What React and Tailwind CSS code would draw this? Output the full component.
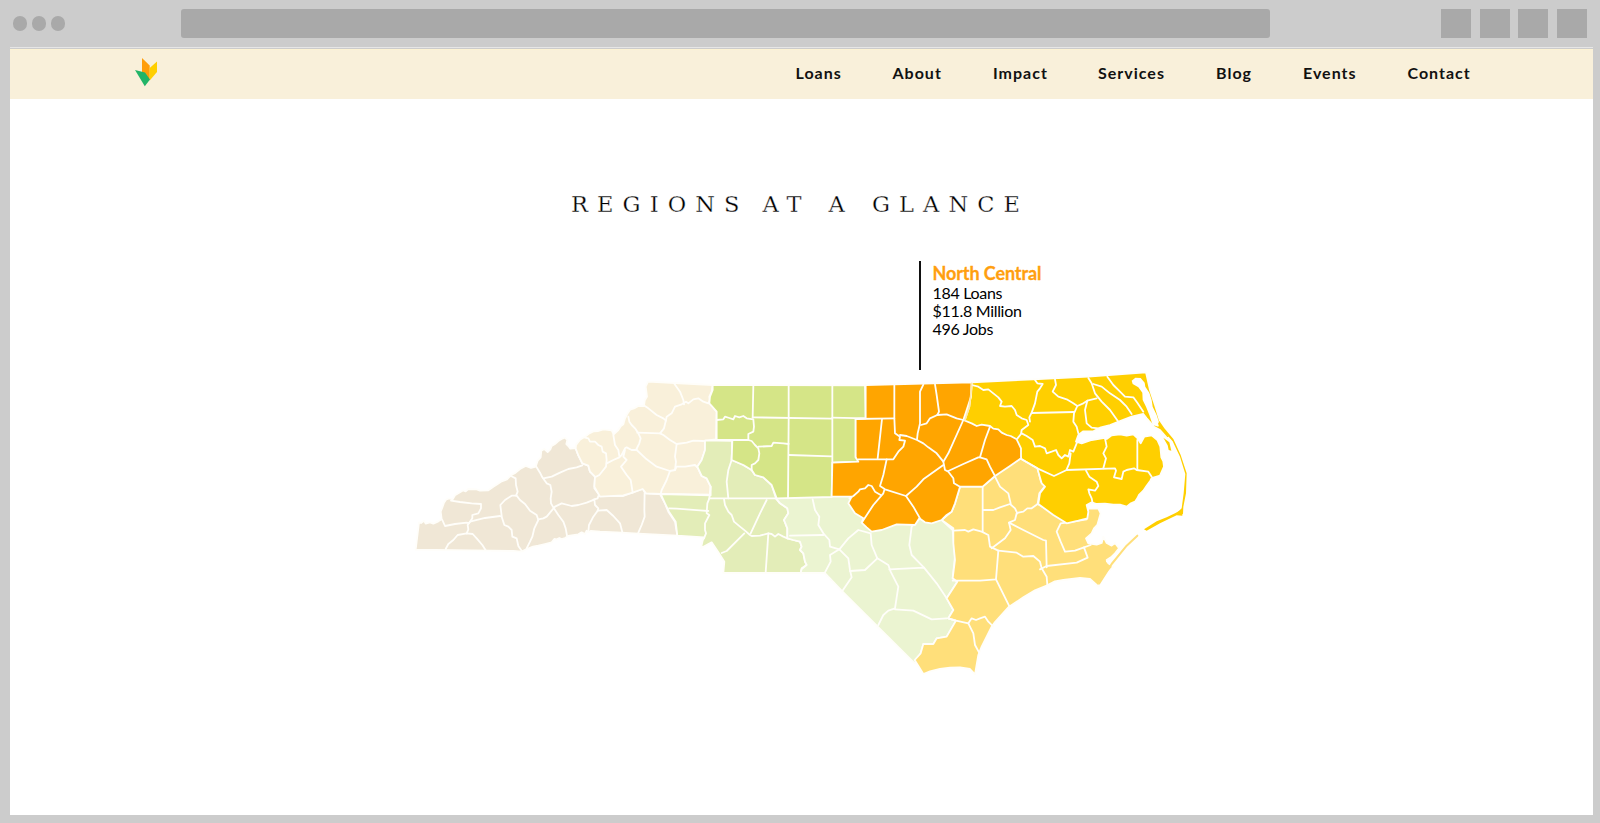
import React from "react";

const NAV = [
  ["Loans", "w-[97px]"],
  ["About", "w-[100.5px]"],
  ["Impact", "w-[105px]"],
  ["Services", "w-[118px]"],
  ["Blog", "w-[87px]"],
  ["Events", "w-[104.5px]"],
  ["Contact", "w-[70px]"],
];

const HEADING = [
  ["REGIONS", "w-[191.5px]"],
  ["AT", "w-[66px]"],
  ["A", "w-[43.5px]"],
  ["GLANCE", "w-[170px]"],
];

// Each sheet of the map has its own origin; coordinates are thirds of a pixel.
const SHEETS = [
  {
    at: [405, 370],
    fill: "#f0e7d6",
    shape:
      "32,539 42,457 48,459 57,452 62,461 75,457 85,461 100,454 110,448 107,425 112,412 117,398 124,388 133,385 143,388 150,376 160,370 175,361 182,364 190,357 215,358 225,362 250,361 265,350 278,342 290,334 306,328 318,316 332,308 345,297 362,288 378,294 392,290 398,272 407,262 409,242 418,237 428,246 436,238 440,228 450,222 460,213 470,207 480,203 487,210 484,222 490,228 496,236 512,234 520,256 532,280 550,287 555,305 570,320 568,355 585,378 655,378 697,362 713,357 723,370 765,372 780,400 790,425 810,455 817,497 700,491 650,488 585,485 557,483 550,487 545,482 540,492 530,487 520,493 490,498 480,504 470,507 463,504 455,508 448,507 440,517 420,522 400,527 384,530 365,537 350,545 325,543",
    lines: [
      "112,450 120,468 150,462 185,458 192,460 195,455 240,444 285,438 290,440 298,465 310,470 320,480 322,500 335,505 340,528 350,542",
      "138,392 165,396 200,400 228,402 228,415 220,430 202,435 202,445 195,455 188,465 190,478 185,490",
      "122,537 130,522 145,510 158,495 185,490 203,492 215,505 232,525 242,541",
      "290,438 286,405 300,390 320,377 335,377 345,390 360,402 375,422 395,435 400,450 388,475 382,500 375,515 365,535",
      "318,318 332,325 333,345 338,365 333,377",
      "400,448 415,445 425,440 440,422 450,410 470,400 500,408 520,405 545,398 560,392 568,388 570,405 580,415 578,422",
      "394,290 405,308 412,322 425,340 436,345 440,365 437,385 438,400 445,412 460,435 475,455 482,475 486,497",
      "415,325 440,320 465,308 490,297 515,292 532,286",
      "568,388 578,385 580,378",
      "550,485 552,465 565,440 578,422 605,420 625,438 645,460 652,487",
      "719,362 718,420 719,440 710,465 700,488",
    ],
  },
  {
    at: [560, 370],
    fill: "#f9f0da",
    shape:
      "48,225 60,209 78,198 88,190 100,184 115,183 130,178 155,181 161,193 175,180 183,168 190,163 195,145 203,130 210,119 222,115 235,108 252,108 254,92 261,80 257,50 264,35 345,39 458,45 455,65 448,80 450,100 470,125 468,208 435,212 435,240 425,270 412,290 425,318 440,325 452,350 452,374 302,372 258,370 248,357 218,368 190,376 120,380 103,350 105,320 90,305 85,287 67,280 55,256 47,236",
    lines: [
      "75,203 85,205 90,215 105,215 115,225 125,230 128,245 138,250 140,270 138,290 130,300 118,315 105,322",
      "140,280 160,270 178,262 185,255 195,235 200,232 215,240 230,240",
      "160,195 165,225 175,240 178,258",
      "205,140 208,155 215,165 225,175 235,190 242,205 238,220 228,240",
      "195,240 190,260 200,270 183,290 200,315 212,330 218,368",
      "232,188 300,190 310,195 330,210 350,222 345,260 348,275 345,300 330,303",
      "230,240 260,268 290,290 330,303 320,330 305,360 302,372",
      "345,300 350,290 375,290 405,285 412,292",
      "350,222 380,218 400,212 430,213",
      "300,190 312,175 318,150 320,140 335,130 345,110 365,103 378,95 385,100 400,88 415,85 430,95 445,100 450,90",
      "343,41 360,65 370,90 372,103",
      "250,105 265,115 290,135 310,145 318,152",
    ],
  },
  {
    at: [700, 370],
    fill: "#e3edb8",
    shape:
      "15,212 97,212 95,270 130,285 155,300 165,315 190,322 215,345 228,385 240,400 262,415 265,430 252,450 262,475 262,505 280,510 300,515 305,530 300,540 310,550 315,575 320,585 305,595 302,609 70,609 73,575 55,547 35,517 3,534 8,512 12,502 -68,497 -73,455 -93,425 -105,400 -118,372 32,376 32,350 20,325 5,318 -8,290 5,270 15,240",
    lines: [
      "97,212 95,270 85,300 80,335 85,385",
      "-93,415 -70,416 0,421 25,423",
      "32,350 28,385 22,400 20,430 28,435 15,460 15,480 18,490 12,505",
      "28,385 235,385",
      "72,387 75,405 85,425 95,435 102,455 120,470 135,482 150,495 155,498 180,497 205,490 215,492 225,500 235,492 250,500 262,505",
      "200,390 180,430 152,490",
      "65,549 80,543 133,490",
      "205,490 203,520 197,607",
    ],
  },
  {
    at: [800, 490],
    fill: "#ebf4d1",
    shape:
      "-72,25 150,15 165,40 200,80 230,110 300,90 345,90 360,85 395,85 425,90 458,120 465,200 458,265 472,275 440,325 460,360 445,385 468,392 440,440 410,445 400,462 370,462 362,490 345,521 130,307 74,249 2,249 5,237 20,225 15,215 10,190 0,180 5,170 0,155 -20,150 -38,145 -38,115 -48,90 -35,70 -38,55 -60,40",
    lines: [
      "38,28 45,60 58,80 55,105 70,130 88,150 90,170 118,178 145,145 175,120 212,130 215,165 232,205 265,225 272,245 295,290 285,355 265,362 250,375 235,405",
      "-30,137 70,135",
      "118,178 90,195 92,215 75,247",
      "118,178 145,205 150,240 155,262 127,303",
      "150,243 195,240 232,205",
      "268,238 372,233 410,280 440,325",
      "360,85 335,110 328,165 335,195 372,233",
      "285,358 340,362 395,388 440,385",
    ],
  },
  {
    at: [700, 370],
    fill: "#d5e587",
    shape:
      "38,45 495,46 497,145 467,147 467,262 475,268 475,275 397,278 395,381 230,385 215,345 190,322 165,315 155,300 130,285 95,270 97,212 50,210 50,125 28,100 30,80 38,60",
    lines: [
      "160,47 158,143",
      "266,47 266,150 264,385",
      "397,47 397,275",
      "158,142 395,146",
      "397,143 497,145",
      "50,150 70,148 75,140 88,144 100,148 105,138 118,142 130,138 140,145 160,148 162,170 160,185 145,192 145,210",
      "50,210 145,210 155,213 165,225 175,235 178,250 175,270 165,280 155,285 155,300",
      "175,230 215,228 220,218 250,220 266,222",
      "267,255 395,259",
    ],
  },
  {
    at: [940, 460],
    fill: "#ffdf7a",
    shape:
      "5,180 40,205 40,250 45,300 38,355 52,365 20,415 40,450 25,475 48,482 20,530 -10,535 -20,552 -50,552 -58,580 -76,600 -50,642 -30,634 0,627 30,623 60,622 90,627 105,643 115,585 125,560 155,500 165,486 205,442 250,412 285,391 320,377 345,364 370,360 420,354 450,357 476,380 480,368 495,346 520,320 505,310 500,300 515,290 525,280 537,265 525,249 515,257 500,249 490,230 485,249 470,254 445,250 438,235 455,220 462,205 472,195 482,160 475,146 445,146 440,178 385,187 350,165 293,132 298,100 315,78 303,65 293,25 243,-5 205,15 165,48 128,80 60,80 45,130 35,155",
    lines: [
      "128,80 128,215",
      "130,150 160,150 180,142 210,132 225,145 232,160",
      "165,50 180,80 205,100 212,130",
      "235,158 250,155 262,145 275,145 293,132",
      "230,160 225,180 207,188 212,210 195,235 155,265",
      "207,188 250,210 310,240 318,242 320,322",
      "40,212 75,210 85,215 100,208 125,215 145,225 150,260 175,272 168,358 120,362 38,362",
      "168,358 210,443",
      "175,272 230,278 250,290 280,288 300,305 305,325 320,350 322,375",
      "300,328 320,318 410,308 443,293 432,262 405,272 375,275 362,245 350,215 362,190 385,187",
      "432,262 452,255",
      "25,475 48,482 85,490 95,475 108,480 120,475 135,470 145,485 160,500",
      "85,490 100,520 105,555 117,577",
    ],
  },
  {
    at: [950, 360],
    fill: "#ffcf00",
    shape:
      "65,67 250,58 415,50 588,37 600,90 615,135 632,190 662,235 650,233 630,210 612,200 590,175 580,162 545,170 510,183 480,195 450,203 430,214 400,214 385,225 378,245 395,250 425,240 460,234 470,237 485,226 510,223 530,227 550,223 563,235 572,250 583,230 605,226 622,240 631,260 634,292 640,304 642,320 630,347 605,354 601,362 590,377 580,392 567,405 562,415 555,425 543,430 530,440 510,434 490,434 465,431 440,432 425,427 410,435 415,455 412,475 385,482 350,490 310,465 265,432 270,400 285,380 275,370 262,325 215,298 200,265 180,250 120,230 60,210 30,195 45,178 58,140 63,100",
    lines: [
      "255,60 262,70 278,72 270,85 262,95 255,130 245,158 238,172 240,185",
      "245,159 372,156",
      "315,58 318,75 308,95 325,110 350,118 370,130 382,138 400,130 412,122 440,115",
      "382,138 372,160 370,185 380,200 385,220",
      "412,122 405,150 410,190 425,203 445,205",
      "415,54 425,70 435,100 455,125 480,150 505,185",
      "430,72 455,80 480,100 510,120 530,140 545,162",
      "472,50 490,75 510,95 525,110 550,112 562,128 580,155",
      "215,220 230,228 248,240 255,260 270,258 285,265 290,280 305,275 318,270 325,285 335,295 345,285 355,290 360,270 370,275 380,250 385,240",
      "215,298 262,325 312,348 350,330 495,325 498,332 492,352 515,357 520,335 530,330 552,325 560,330 595,335 605,350",
      "350,328 358,310 362,280",
      "465,235 470,260 460,280 468,295 460,325",
      "562,240 562,330",
      "408,332 418,350 440,365 445,378 435,392 415,388 418,400 425,415 428,430",
      "65,75 85,80 100,90 115,88 130,100 145,112 155,125 150,138 165,140 185,138 195,150 200,165 215,175 230,180 235,195 215,210 213,222 202,236",
    ],
  },
  {
    at: [820, 370],
    fill: "#ffa500",
    shape:
      "137,45 455,37 453,80 440,120 430,150 455,160 470,168 485,164 510,168 520,176 535,178 545,188 560,195 572,198 590,208 603,235 603,265 570,288 525,318 488,350 420,350 405,400 395,425 380,435 365,450 335,460 315,457 298,445 285,465 230,463 185,480 155,485 140,472 125,458 130,445 105,430 85,400 95,380 35,380 37,278 115,275 107,262 107,147 137,145",
    lines: [
      "223,46 223,145 225,190 240,200 238,210 255,212 250,230 235,245 225,260 220,268 115,268",
      "186,147 173,265",
      "107,147 223,145",
      "310,44 300,65 300,160 293,190 291,208",
      "240,195 260,198 291,210 310,220 325,232 350,250 370,275 375,300 385,305 400,325 402,340 420,350",
      "345,43 350,75 357,125 352,135 330,145 320,160 303,165",
      "352,135 380,133 410,145 430,150",
      "430,150 385,250 370,275",
      "510,170 495,210 480,262 475,262 430,282 385,303",
      "480,262 500,268 510,290 525,318",
      "200,268 190,315 180,348 195,358 258,378 290,350 310,328 370,285",
      "258,378 280,410 300,445",
      "193,360 190,370 160,405 125,458",
      "88,385 100,378 115,365 120,358 135,355 145,345 155,348 165,365 182,375",
    ],
  },
];

function RegionMap() {
  return (
    <svg className="block h-[330px] w-[800px]" viewBox="405 360 800 330" strokeLinejoin="round" strokeLinecap="round">
      {SHEETS.map((s) => (
        <g key={s.fill} transform={`translate(${s.at[0]} ${s.at[1]}) scale(0.33333)`} stroke="#fffefa" strokeWidth="5.4">
          <polygon points={s.shape} fill={s.fill} />
          {s.lines.map((l) => (
            <polyline key={l} points={l} fill="none" />
          ))}
        </g>
      ))}
      <g transform="translate(950 360) scale(0.33333)" fill="none">
        <polyline points="65,70 63,100 58,140 45,180" stroke="#ffe9ac" strokeWidth="5" />
        <polygon
          fill="#fff"
          points="545,62 556,53 572,54 584,68 586,80 598,98 605,120 608,140 620,165 628,190 625,200 608,195 598,165 588,140 578,120 577,98 565,82 548,72"
        />
        <path fill="#ffcf00" d="M628 183l15 22 27 32 22 48 18 55-2 60-8 40-1 23-16-6 12-12 6-45 5-58-16-52-22-46-28-32-16-20z" />
        <path fill="#ffcf00" d="M640 233l18 14 6 25-8-2-3-14z" />
        <path fill="#ffcf00" d="M697 448l-22 12-25 12-30 12-38 24 8 4 40-22 28-14 22-10 17 1z" />
      </g>
      <g transform="translate(940 460) scale(0.33333)" fill="none">
        <path stroke="#ffdf7a" strokeWidth="6" d="M592 227L560 257L515 312L478 370" />
        <path stroke="#fff" strokeWidth="4" d="M500 305l14-5 20-22" />
      </g>
    </svg>
  );
}

function Logo() {
  return (
    <svg className="h-[30px] w-[24px]" viewBox="0 0 24 30">
      <path fill="#ff9d0a" d="M7 1L14.7 8.5V23L7 14.5z" />
      <path fill="#ffcf00" d="M14.7 11L22 4.5V15L14.7 23.5z" />
      <path fill="#22b467" d="M0 13L10 15.5L15 22.5L9.8 29.3z" />
    </svg>
  );
}

export default function App() {
  return (
    <div className="flex h-[823px] w-[1600px] flex-col overflow-hidden bg-[#ccc] font-['Lato',sans-serif] text-[#111]">
      <div className="flex h-[47px] shrink-0 items-start pl-[13px] pt-[9px]">
        <div className="flex h-[29px] items-center gap-[4.5px]">
          <span className="size-[14.3px] rounded-full bg-[#a9a9a9]" />
          <span className="size-[14.3px] rounded-full bg-[#a9a9a9]" />
          <span className="size-[14.3px] rounded-full bg-[#a9a9a9]" />
        </div>
        <div className="ml-[116px] h-[28.5px] w-[1089.3px] rounded-[3px] bg-[#a9a9a9]" />
        <div className="ml-[171px] flex gap-[8.5px]">
          <span className="h-[28.5px] w-[30px] bg-[#a9a9a9]" />
          <span className="h-[28.5px] w-[30px] bg-[#a9a9a9]" />
          <span className="h-[28.5px] w-[30px] bg-[#a9a9a9]" />
          <span className="h-[28.5px] w-[30px] bg-[#a9a9a9]" />
        </div>
      </div>
      <div className="ml-[10px] mb-px h-px w-[1583px] shrink-0 bg-[#e6e6e6]" />
      <main className="ml-[10px] flex h-[766px] w-[1583px] shrink-0 flex-col bg-white">
        <header className="flex h-[50px] shrink-0 items-start border-t border-[#fdf3d3] bg-[#f9f0da] pl-[124.5px] pt-[7px]">
          <Logo />
          <nav className="ml-[637px] flex pt-[4px] text-[16px] font-bold leading-[24px] tracking-[1px]">
            {NAV.map(([label, width]) => (
              <a key={label} className={width}>
                {label}
              </a>
            ))}
          </nav>
        </header>
        <h1 className="ml-[561px] mt-[88px] flex h-[34px] font-['DejaVu_Serif',serif] text-[22.5px] leading-[34px] tracking-[9.1px] text-black [-webkit-text-stroke:0.3px_white]">
          {HEADING.map(([word, width]) => (
            <span key={word} className={width}>
              {word}
            </span>
          ))}
        </h1>
        <div className="ml-[909px] mt-[40px] flex h-[109px] border-l-2 border-[#111] pl-[11.5px]">
          <div className="pt-[1px] text-[16px] leading-[18px] tracking-[-0.3px] text-black">
            <h2 className="text-[18px] font-bold leading-[22px] tracking-[-0.1px] text-[#ff9f0f] [-webkit-text-stroke:0.3px_#ff9f0f]">
              North Central
            </h2>
            <p>184 Loans</p>
            <p>$11.8 Million</p>
            <p>496 Jobs</p>
          </div>
        </div>
        <div className="ml-[395px] -mt-[10px]">
          <RegionMap />
        </div>
      </main>
    </div>
  );
}
